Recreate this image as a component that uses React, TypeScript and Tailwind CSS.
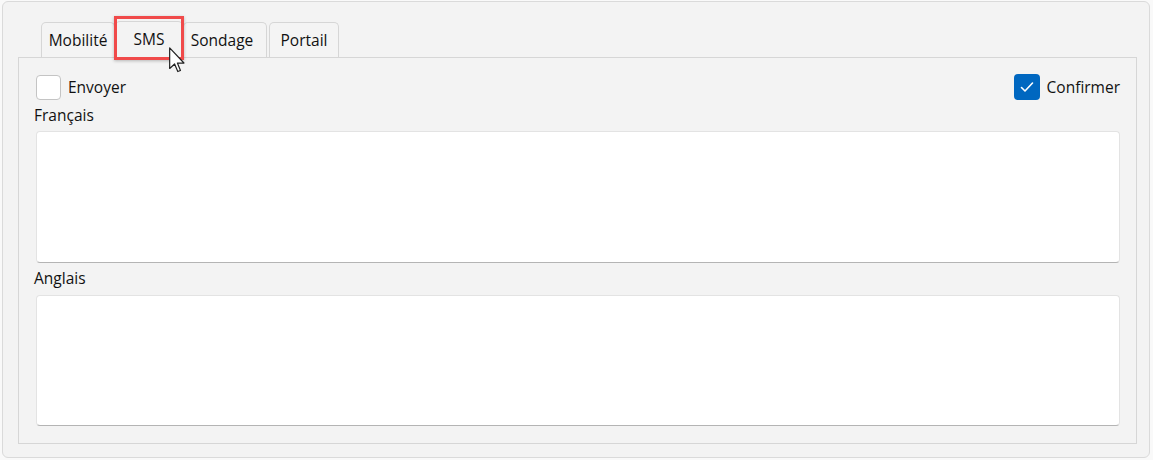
import React from 'react';

const font = { fontFamily: '"Open Sans", "Noto Sans", sans-serif' };

function Tab({ label, width, selected, gap, extra }: { label: string; width: string; selected?: boolean; gap?: boolean; extra?: string }) {
  if (selected) {
    return (
      <div
        className={`${width} h-[37px] -mb-px flex items-center justify-center rounded-t-[5px] border border-b-0 border-[#d6d6d6] bg-[#f3f3f3] text-[15.5px] text-[#111] z-10`}
      >
        {label}
      </div>
    );
  }
  return (
    <div
      className={`${width} ${gap ? 'ml-[2px]' : ''} ${extra ?? ''} h-[35px] flex items-center justify-center pt-[2px] rounded-t-[5px] border border-b-0 border-[#d6d6d6] bg-[#f4f4f4] text-[15.5px] text-[#111]`}
    >
      {label}
    </div>
  );
}

function Checkbox({ checked, label }: { checked?: boolean; label: string }) {
  return (
    <div className="flex items-center gap-[7px]">
      {checked ? (
        <div className="w-[26px] h-[26px] rounded-[4px] bg-[#0067c0] flex items-center justify-center">
          <svg width="16" height="16" viewBox="0 0 16 16" fill="none">
            <path d="M2.5 8.5 L6 12 L13.5 4" stroke="white" strokeWidth="1.6" strokeLinecap="round" strokeLinejoin="round" />
          </svg>
        </div>
      ) : (
        <div className="w-[25px] h-[25px] rounded-[4px] border border-[#c4c4c4] bg-white" />
      )}
      <span className="text-[15.5px] text-[#111] leading-[20px]">{label}</span>
    </div>
  );
}

export default function App() {
  return (
    <div className="relative w-[1153px] h-[460px] bg-[#f9f9f9] pt-px pl-[2px]" style={font}>
      <div className="w-[1148px] h-[457px] rounded-[6px] border border-[#dadada] bg-[#f3f3f3] pl-[15px] pt-[18px]">
        {/* tab headers */}
        <div className="relative flex items-end h-[37px] pl-[23px]">
          <Tab label="Mobilité" width="w-[74px]" />
          <Tab label="SMS" width="w-[68px]" selected />
          <Tab label="Sondage" width="w-[84px]" extra="pr-[6px]" />
          <Tab label="Portail" width="w-[70px]" gap />
        </div>

        {/* tab page */}
        <div className="w-[1119px] h-[387px] border border-[#d6d6d6] bg-[#f3f3f3] pl-[17px] pr-[16px] pt-[16px]">
          <div className="flex items-center justify-between h-[26px]">
            <Checkbox label="Envoyer" />
            <Checkbox label="Confirmer" checked />
          </div>

          <div className="mt-[5px] -ml-[2px] text-[15.5px] leading-[20px] text-[#111]">Français</div>
          <div className="mt-[6px] h-[132px] rounded-[4px] border border-[#e3e3e3] border-b-[#b4b4b4] bg-white" />

          <div className="mt-[5px] -ml-[2px] text-[15.5px] leading-[20px] text-[#111]">Anglais</div>
          <div className="mt-[7px] h-[131px] rounded-[4px] border border-[#e3e3e3] border-b-[#b4b4b4] bg-white" />
        </div>
      </div>

      {/* red highlight around the SMS tab */}
      <div className="absolute z-20 left-[114px] top-[16px] w-[70px] h-[44px] border-[3px] border-[#f04a4a] shadow-[0_1px_3px_rgba(0,0,0,0.25)] pointer-events-none" />

      {/* mouse pointer */}
      <svg className="absolute z-30 left-[169px] top-[47px]" width="16" height="27" viewBox="0 0 12 20">
        <path
          d="M0.5 0.5 L0.5 16 L4.2 12.6 L6.6 18.3 L8.6 17.5 L6.3 11.9 L11.2 11.9 Z"
          fill="white"
          stroke="#222"
          strokeWidth="0.9"
          strokeLinejoin="round"
        />
      </svg>
    </div>
  );
}
